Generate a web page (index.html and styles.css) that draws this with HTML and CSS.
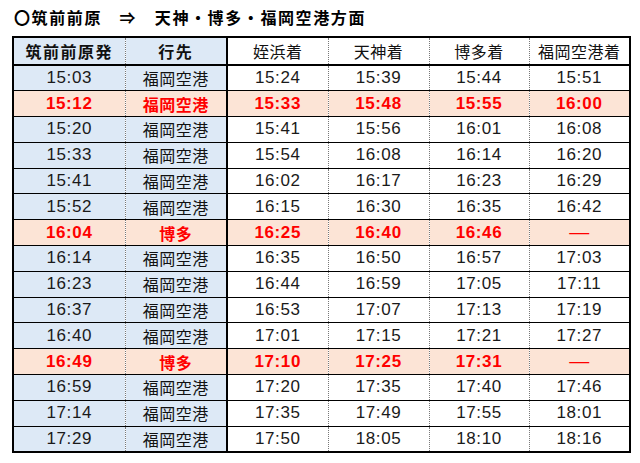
FILE: index.html
```html
<!DOCTYPE html>
<html lang="ja">
<head>
<meta charset="utf-8">
<title>筑前前原 時刻表</title>
<link rel="stylesheet" href="styles.css">
</head>
<body>
<div class="title">〇筑前前原　⇒　天神・博多・福岡空港方面</div>
<table class="tt">
  <colgroup>
    <col class="c1"><col class="c2"><col class="c3"><col class="c4"><col class="c5"><col class="c6">
  </colgroup>
  <thead>
    <tr class="head">
      <th class="blue">筑前前原発</th>
      <th class="blue sep">行先</th>
      <th class="plain">姪浜着</th>
      <th class="plain">天神着</th>
      <th class="plain">博多着</th>
      <th class="plain">福岡空港着</th>
    </tr>
  </thead>
  <tbody>
    <tr><td class="t blue">15:03</td><td class="d blue sep">福岡空港</td><td class="t">15:24</td><td class="t">15:39</td><td class="t">15:44</td><td class="t">15:51</td></tr>
    <tr class="hi"><td class="t">15:12</td><td class="d sep">福岡空港</td><td class="t">15:33</td><td class="t">15:48</td><td class="t">15:55</td><td class="t">16:00</td></tr>
    <tr><td class="t blue">15:20</td><td class="d blue sep">福岡空港</td><td class="t">15:41</td><td class="t">15:56</td><td class="t">16:01</td><td class="t">16:08</td></tr>
    <tr><td class="t blue">15:33</td><td class="d blue sep">福岡空港</td><td class="t">15:54</td><td class="t">16:08</td><td class="t">16:14</td><td class="t">16:20</td></tr>
    <tr><td class="t blue">15:41</td><td class="d blue sep">福岡空港</td><td class="t">16:02</td><td class="t">16:17</td><td class="t">16:23</td><td class="t">16:29</td></tr>
    <tr><td class="t blue">15:52</td><td class="d blue sep">福岡空港</td><td class="t">16:15</td><td class="t">16:30</td><td class="t">16:35</td><td class="t">16:42</td></tr>
    <tr class="hi"><td class="t">16:04</td><td class="d sep">博多</td><td class="t">16:25</td><td class="t">16:40</td><td class="t">16:46</td><td class="dash">—</td></tr>
    <tr><td class="t blue">16:14</td><td class="d blue sep">福岡空港</td><td class="t">16:35</td><td class="t">16:50</td><td class="t">16:57</td><td class="t">17:03</td></tr>
    <tr><td class="t blue">16:23</td><td class="d blue sep">福岡空港</td><td class="t">16:44</td><td class="t">16:59</td><td class="t">17:05</td><td class="t">17:11</td></tr>
    <tr><td class="t blue">16:37</td><td class="d blue sep">福岡空港</td><td class="t">16:53</td><td class="t">17:07</td><td class="t">17:13</td><td class="t">17:19</td></tr>
    <tr><td class="t blue">16:40</td><td class="d blue sep">福岡空港</td><td class="t">17:01</td><td class="t">17:15</td><td class="t">17:21</td><td class="t">17:27</td></tr>
    <tr class="hi"><td class="t">16:49</td><td class="d sep">博多</td><td class="t">17:10</td><td class="t">17:25</td><td class="t">17:31</td><td class="dash">—</td></tr>
    <tr><td class="t blue">16:59</td><td class="d blue sep">福岡空港</td><td class="t">17:20</td><td class="t">17:35</td><td class="t">17:40</td><td class="t">17:46</td></tr>
    <tr><td class="t blue">17:14</td><td class="d blue sep">福岡空港</td><td class="t">17:35</td><td class="t">17:49</td><td class="t">17:55</td><td class="t">18:01</td></tr>
    <tr><td class="t blue">17:29</td><td class="d blue sep">福岡空港</td><td class="t">17:50</td><td class="t">18:05</td><td class="t">18:10</td><td class="t">18:16</td></tr>
  </tbody>
</table>
</body>
</html>
```
FILE: styles.css
```css
html, body {
  margin: 0;
  padding: 0;
  background: #ffffff;
}
body {
  font-family: "Noto Sans CJK JP", "Liberation Sans", sans-serif;
  color: #111;
}
.title {
  height: 36px;
  line-height: 34px;
  padding-left: 14px;
  font-size: 16px;
  font-weight: bold;
  letter-spacing: 1.6px;
  color: #000;
}
.tt {
  margin-left: 12px;
  border-collapse: collapse;
  table-layout: fixed;
  width: 617px;
  border: 2px solid #000;
}
.c1 { width: 112px; }
.c2 { width: 102px; }
.c3 { width: 101px; }
.c4 { width: 101px; }
.c5 { width: 100px; }
.c6 { width: 101px; }
.tt th, .tt td {
  padding: 0;
  text-align: center;
  vertical-align: middle;
  border-left: 1px dotted #777;
  border-top: 1px solid #000;
  overflow: hidden;
  white-space: nowrap;
}
.tt tr > :first-child {
  border-left: 2px solid #000;
}
.tt .sep {
  border-right: 2px solid #000;
}
.head {
  height: 28px;
}
.head th {
  border-bottom: 2px solid #000;
  font-size: 16px;
  letter-spacing: 0.5px;
}
.head th.blue {
  font-weight: bold;
  letter-spacing: 1.5px;
}
.head th.plain {
  font-weight: normal;
  background: #fff;
}
.tt tbody tr {
  height: 25.8px;
}
.blue {
  background: #dde9f6;
}
.t {
  font-family: "Liberation Sans", "Noto Sans", sans-serif;
  font-size: 17px;
  letter-spacing: 0.6px;
  color: #1a1a1a;
}
.d {
  font-size: 16px;
  letter-spacing: 0.5px;
  color: #111;
}
.dash {
  font-family: "Liberation Sans", sans-serif;
  font-size: 20px;
}
.hi td {
  background: #fce4d6;
  color: #ff0000;
  font-weight: bold;
}
.hi .dash {
  font-weight: normal;
}
```
